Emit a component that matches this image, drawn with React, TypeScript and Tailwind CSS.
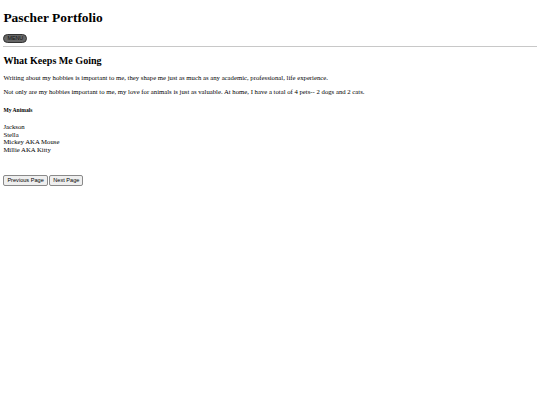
export default function App() {
  const pets = ["Jackson", "Stella", "Mickey AKA Mouse", "Millie AKA Kitty"];

  return (
    <div className="min-h-[405px] bg-white px-[3.4px] text-black [font-family:'Liberation_Serif',serif] text-[6.72px]">
      {/* Header */}
      <h1 className="pt-[9.5px] pb-[9px] text-[13.44px] font-bold leading-[1.15]">Pascher Portfolio</h1>
      <button className="block rounded-full border border-[#333] bg-[#666] px-[3px] text-[5.4px] leading-[7px] text-[#111] [font-family:'Liberation_Sans',sans-serif]">
        MENU
      </button>
      <hr className="mt-[3.5px] border-t border-[#c8c8c8]" />

      {/* Content */}
      <h2 className="mt-[7.5px] mb-[7px] text-[10.08px] font-bold leading-[1.15]">What Keeps Me Going</h2>
      <p className="my-[7px] leading-[1.15]">
        Writing about my hobbies is important to me, they shape me just as much as any academic, professional, life experience.
      </p>
      <p className="my-[7px] leading-[1.15]">
        Not only are my hobbies important to me, my love for animals is just as valuable. At home, I have a total of 4 pets-- 2 dogs and 2 cats.
      </p>
      <h5 className="mt-[11px] mb-[9.5px] text-[5.6px] font-bold leading-[1.15]">My Animals</h5>
      <div className="leading-[1.15]">
        {pets.map((p) => (
          <div key={p}>{p}</div>
        ))}
      </div>

      <div className="mt-[21px] flex gap-[1.5px] [font-family:'Liberation_Sans',sans-serif]">
        <button className="rounded-[2px] border border-[#8a8a8a] bg-[#efefef] px-[3px] text-[5.6px] leading-[9px] text-black">
          Previous Page
        </button>
        <button className="rounded-[2px] border border-[#8a8a8a] bg-[#efefef] px-[3px] text-[5.6px] leading-[9px] text-black">
          Next Page
        </button>
      </div>
    </div>
  );
}
